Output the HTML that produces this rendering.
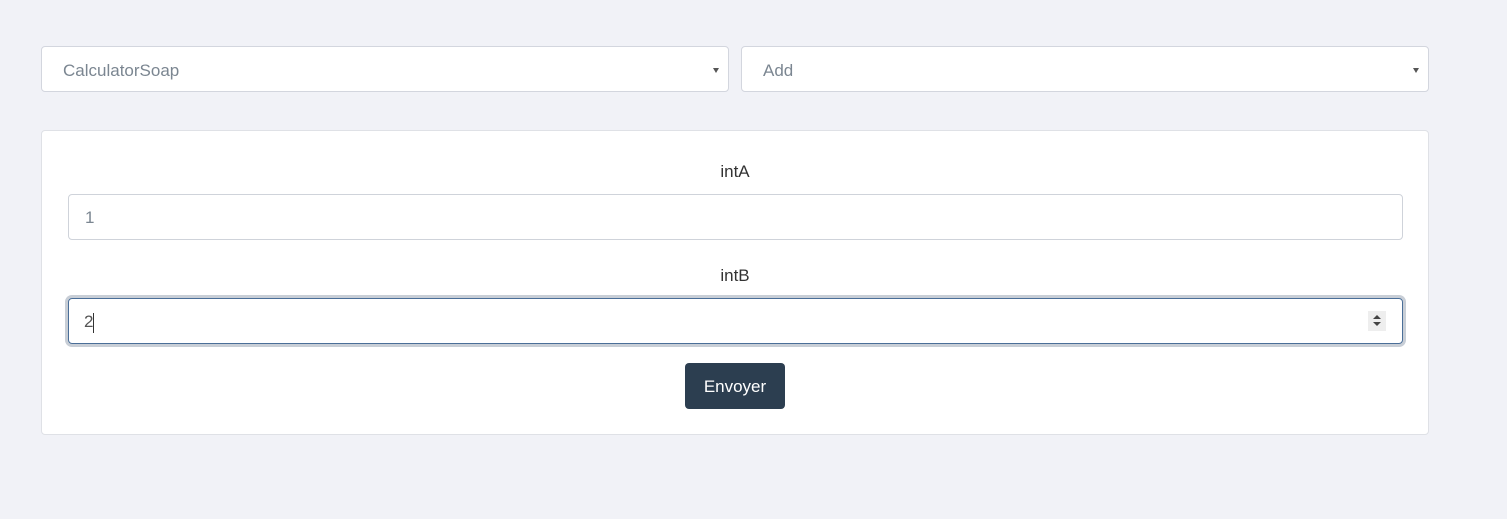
<!DOCTYPE html>
<html><head><style>
body{margin:0;background:#f1f2f7;font-family:"Liberation Sans",sans-serif;width:1507px;height:519px;position:relative;overflow:hidden}
.sel{position:absolute;top:46px;background:#fff;border:1px solid #d3d6de;border-radius:4px;box-sizing:border-box;height:46px;color:#7b8691;font-size:17px;line-height:47px;padding-left:21px}
.sel:after{content:"";position:absolute;right:9px;top:21px;border-left:3px solid transparent;border-right:3px solid transparent;border-top:5px solid #555}
.card{position:absolute;left:41px;top:130px;width:1388px;height:305px;background:#fff;border:1px solid #dfe1e6;border-radius:4px;box-sizing:border-box}
.lbl{position:absolute;width:100%;text-align:center;font-size:17px;color:#333}
.inp{position:absolute;left:26px;width:1335px;height:46px;border:1px solid #cfd3da;border-radius:4px;box-sizing:border-box;font-size:17px;color:#7b8691;line-height:45px;padding-left:16px}
.btn{position:absolute;left:643px;top:232px;width:100px;height:46px;background:#2c3e50;border-radius:4px;color:#fff;font-size:17px;text-align:center;line-height:47px}
</style></head><body>
<div class="sel" style="left:41px;width:688px">CalculatorSoap</div>
<div class="sel" style="left:741px;width:688px">Add</div>
<div class="card">
<div class="lbl" style="top:31px">intA</div>
<div class="inp" style="top:63px">1</div>
<div class="lbl" style="top:135px">intB</div>
<div class="inp" style="top:167px;border:1px solid #4a6e98;box-shadow:0 0 0 3px #c8ced6;color:#555;padding-left:15px">2<span style="display:inline-block;width:1px;height:20px;background:#333;vertical-align:middle"></span>
<div style="position:absolute;right:16px;top:12px;width:18px;height:20px;background:#eee"><div style="position:absolute;left:5px;top:4px;border-left:4px solid transparent;border-right:4px solid transparent;border-bottom:4px solid #444"></div><div style="position:absolute;left:5px;top:11px;border-left:4px solid transparent;border-right:4px solid transparent;border-top:4px solid #444"></div></div>
</div>
<div class="btn">Envoyer</div>
</div>
</body></html>
